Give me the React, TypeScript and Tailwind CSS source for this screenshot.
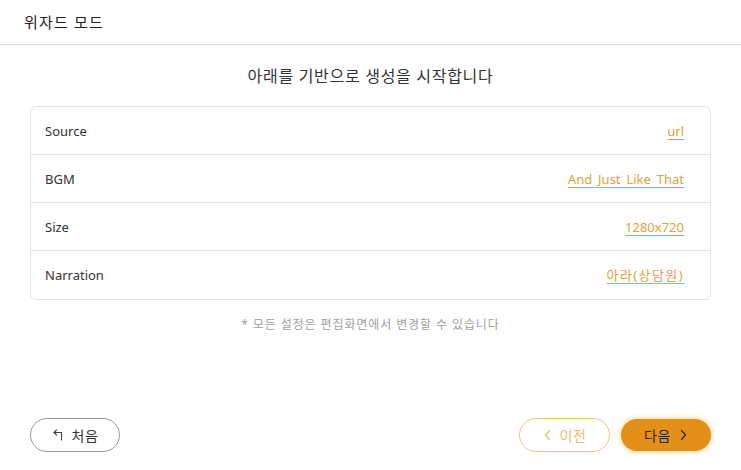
import React from "react";

const rows = [
  { label: "Source", value: "url", cls: "" },
  { label: "BGM", value: "And Just Like That", cls: "[word-spacing:2.5px]" },
  { label: "Size", value: "1280x720", cls: "" },
  { label: "Narration", value: "아라(상담원)", cls: "tracking-[1.4px]" },
];

export default function App() {
  return (
    <div
      className="w-[741px] h-[470px] bg-white flex flex-col text-[#222]"
      style={{ fontFamily: '"Noto Sans", "Noto Sans CJK KR", sans-serif' }}
    >
      <div className="h-[45px] shrink-0 border-b border-[#d6d6d6] flex items-center px-[24px]">
        <span className="text-[15px] tracking-[1.2px] text-[#222] leading-none">위자드 모드</span>
      </div>
      <div className="flex-1 flex flex-col px-[30px]">
        <div className="h-[61px] flex items-center justify-center text-[16px] tracking-[0.7px] text-[#333] pt-[1px]">
          아래를 기반으로 생성을 시작합니다
        </div>
        <div className="border border-[#e3e3e3] rounded-[6px] flex flex-col">
          {rows.map((r, i) => (
            <div
              key={r.label}
              className={`h-[48px] flex items-center justify-between pl-[14px] pr-[26px] pt-[2px] ${
                i < rows.length - 1 ? "border-b border-[#e3e3e3]" : ""
              }`}
            >
              <span className="text-[13px] text-[#333]">{r.label}</span>
              <a className={`text-[13px] text-[#e0a23a] underline underline-offset-[3px] cursor-pointer ${r.cls}`}>
                {r.value}
              </a>
            </div>
          ))}
        </div>
        <div className="h-[50px] flex items-center justify-center text-[12px] tracking-[0.9px] text-[#a0a0a0]">
          * 모든 설정은 편집화면에서 변경할 수 있습니다
        </div>
        <div className="flex-1" />
        <div className="flex items-center justify-between mb-[18px]">
          <button className="w-[90px] h-[34px] rounded-full border border-[#9a9a9a] flex items-center justify-center gap-[6px] text-[14px] tracking-[0.5px] text-[#333] bg-white">
            <svg width="14" height="14" viewBox="0 0 14 14" fill="none" stroke="#444" strokeWidth="1.1" strokeLinecap="round" strokeLinejoin="round">
              <path d="M4.5 2 L2 4.5 L4.5 7" />
              <path d="M2 4.5 H9.5 V12" />
            </svg>
            처음
          </button>
          <div className="flex items-center gap-[11px]">
            <button className="w-[91px] h-[34px] rounded-full border border-[#efc77a] flex items-center justify-center gap-[8px] text-[14px] tracking-[0.5px] text-[#eebc68] bg-white">
              <svg width="9" height="12" viewBox="0 0 9 12" fill="none" stroke="#eebc68" strokeWidth="1.3" strokeLinecap="round" strokeLinejoin="round">
                <path d="M6.5 1.5 L2.5 6 L6.5 10.5" />
              </svg>
              이전
            </button>
            <button className="w-[90px] h-[32px] rounded-full bg-[#e3901a] flex items-center justify-center gap-[8px] text-[14px] tracking-[0.5px] text-[#3a2608] shadow-[0_0_4px_2px_#fde3b0]">
              다음
              <svg width="9" height="12" viewBox="0 0 9 12" fill="none" stroke="#3a2608" strokeWidth="1.3" strokeLinecap="round" strokeLinejoin="round">
                <path d="M2.5 1.5 L6.5 6 L2.5 10.5" />
              </svg>
            </button>
          </div>
        </div>
      </div>
    </div>
  );
}
